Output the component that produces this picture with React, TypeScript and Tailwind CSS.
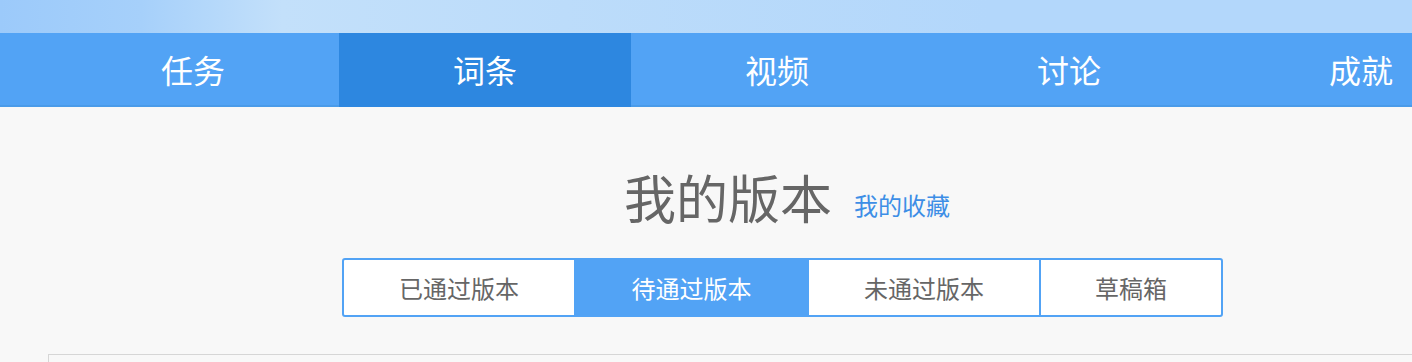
import React from "react";

const navItems = ["任务", "词条", "视频", "讨论", "成就"];

export default function App() {
  return (
    <div className="h-[362px] w-[1412px] overflow-hidden bg-[#f8f8f8] font-['Noto_Sans_CJK_SC',sans-serif]">
      <div className="h-[33px] bg-[linear-gradient(90deg,#9ccafa_0%,#a6d0fa_10%,#c3e0fa_20%,#bcdcfa_40%,#b3d7fb_70%,#b3d7fb_100%)]" />
      <div className="flex h-[74px] bg-[#52a3f5] pl-[47px] shadow-[inset_0_-2px_0_#4a9be9]">
        {navItems.map((t, i) => (
          <div
            key={t}
            className={
              i === 1
                ? "flex h-full w-[292px] shrink-0 items-center justify-center bg-[#2d87e0] pb-[3px] text-[32px] leading-none text-white"
                : "flex h-full w-[292px] shrink-0 items-center justify-center pb-[3px] text-[32px] leading-none text-white"
            }
          >
            {t}
          </div>
        ))}
      </div>
      <div className="ml-[342px] w-[881px] pt-[64px]">
        <div className="flex items-end pl-[282px]">
          <h1 className="text-[52px] font-normal leading-none text-[#666666]">我的版本</h1>
          <a className="ml-[22px] pb-[6px] text-[24px] leading-none text-[#3d8ee6]">我的收藏</a>
        </div>
        <div className="mt-[35px] flex h-[59px] overflow-hidden rounded-[3px] border-2 border-[#52a3f5] bg-white text-[24px] leading-none text-[#666666]">
          <div className="flex w-[230px] items-center justify-center">已通过版本</div>
          <div className="flex w-[233px] items-center justify-center border-l-2 border-[#52a3f5] bg-[#52a3f5] text-white">待通过版本</div>
          <div className="flex w-[232px] items-center justify-center border-l-2 border-[#52a3f5]">未通过版本</div>
          <div className="flex w-[182px] items-center justify-center border-l-2 border-[#52a3f5]">草稿箱</div>
        </div>
      </div>
      <div className="ml-[48px] mt-[37px] h-[40px] border-l border-t border-[#d6d6d6]" />
    </div>
  );
}
